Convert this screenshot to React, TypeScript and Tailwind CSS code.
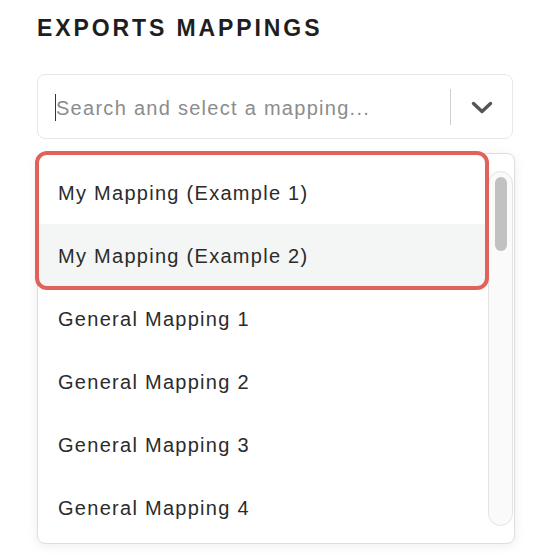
const ITEMS = [
  "My Mapping (Example 1)",
  "My Mapping (Example 2)",
  "General Mapping 1",
  "General Mapping 2",
  "General Mapping 3",
  "General Mapping 4",
];

export default function App() {
  return (
    <div className="min-h-[555px] bg-white pl-[37px] pt-[17px] font-['Liberation_Sans',Arial,sans-serif]">
      {/* Title */}
      <h1 className="text-[23px] leading-[23px] font-bold tracking-[2.9px] text-[#1e1e1e]">
        EXPORTS MAPPINGS
      </h1>

      {/* Search select */}
      <div className="mt-[34px] w-[476px] h-[65px] flex items-center rounded-lg border border-[#e8e8e8] bg-white">
        <div className="flex-1 flex items-center pl-[17px] pt-[2px]">
          <span className="w-px h-[27px] bg-[#333]" />
          <span className="text-[20px] tracking-[1.28px] text-[#8c8c8c]">
            Search and select a mapping...
          </span>
        </div>
        <span className="w-px h-[36px] bg-[#cfcfcf]" />
        <div className="w-[61px] flex items-center justify-center pt-[2px]">
          <svg width="22" height="13" viewBox="0 0 22 13" fill="none">
            <path
              d="M2.5 2.5 L11 10.5 L19.5 2.5"
              stroke="#555"
              strokeWidth="3.4"
              strokeLinecap="round"
              strokeLinejoin="round"
            />
          </svg>
        </div>
      </div>

      {/* Dropdown list */}
      <div className="relative mt-[14px] w-[478px] h-[391px] flex rounded-lg border border-[#dedede] bg-white shadow-[0_2px_12px_rgba(0,0,0,0.07)]">
        <div className="flex-1 overflow-hidden pt-[7px] rounded-l-lg">
          {ITEMS.map((item, i) => (
            <div
              key={item}
              className={`h-[63px] flex items-center px-5 pt-px text-[20px] tracking-[1.28px] text-[#2b2b2b] ${
                i === 1 ? "bg-[#f4f5f5]" : ""
              }`}
            >
              {item}
            </div>
          ))}
        </div>

        {/* Scrollbar */}
        <div className="w-[26px] pr-px py-[17px]">
          <div className="h-full w-[25px] rounded-full border border-[#e3e3e3] bg-[#fafafa] pt-[5px] flex justify-center">
            <div className="w-[12px] h-[74px] rounded-full bg-[#c1c1c1]" />
          </div>
        </div>

        {/* Highlight annotation */}
        <div className="absolute left-[-3px] top-[-3px] w-[454px] h-[139px] rounded-[12px] border-4 border-[#e1625b] pointer-events-none" />
      </div>
    </div>
  );
}
